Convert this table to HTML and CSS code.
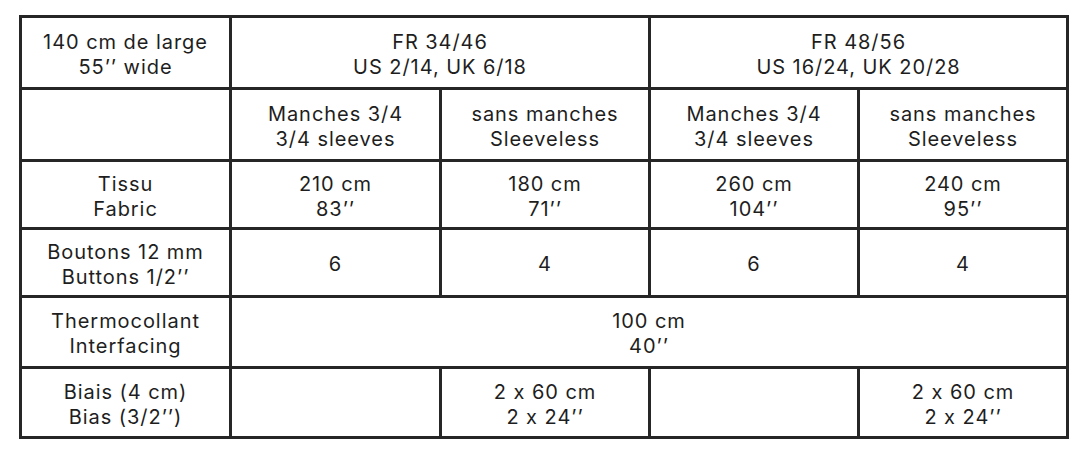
FILE: index.html
```html
<!DOCTYPE html>
<html lang="fr">
<head>
<meta charset="utf-8">
<title>Métrage</title>
<link rel="stylesheet" href="styles.css">
</head>
<body>
<div class="page">
<table class="chart">
  <colgroup>
    <col class="c1"><col class="c1"><col class="c2"><col class="c2"><col class="c2">
  </colgroup>
  <tr class="r1">
    <td>140 cm de large<br>55’’ wide</td>
    <td colspan="2">FR 34/46<br>US 2/14, UK 6/18</td>
    <td colspan="2">FR 48/56<br>US 16/24, UK 20/28</td>
  </tr>
  <tr class="r2">
    <td></td>
    <td>Manches 3/4<br>3/4 sleeves</td>
    <td>sans manches<br>Sleeveless</td>
    <td>Manches 3/4<br>3/4 sleeves</td>
    <td>sans manches<br>Sleeveless</td>
  </tr>
  <tr class="r3">
    <td>Tissu<br>Fabric</td>
    <td>210 cm<br>83’’</td>
    <td>180 cm<br>71’’</td>
    <td>260 cm<br>104’’</td>
    <td>240 cm<br>95’’</td>
  </tr>
  <tr class="r4">
    <td>Boutons 12 mm<br>Buttons 1/2’’</td>
    <td>6</td>
    <td>4</td>
    <td>6</td>
    <td>4</td>
  </tr>
  <tr class="r5">
    <td>Thermocollant<br>Interfacing</td>
    <td colspan="4">100 cm<br>40’’</td>
  </tr>
  <tr class="r6">
    <td>Biais (4 cm)<br>Bias (3/2’’)</td>
    <td></td>
    <td>2 x 60 cm<br>2 x 24’’</td>
    <td></td>
    <td>2 x 60 cm<br>2 x 24’’</td>
  </tr>
</table>
</div>
</body>
</html>
```
FILE: styles.css
```css
html, body {
  margin: 0;
  padding: 0;
  background: #fff;
}
.page {
  padding: 15px 0 0 19px;
}
.chart {
  border-collapse: collapse;
  table-layout: fixed;
  width: 1047px;
  border: 3px solid #262626;
  font-family: Inter, "Liberation Sans", sans-serif;
  font-size: 20px;
  letter-spacing: 0.95px;
  font-feature-settings: "calt" 0;
  line-height: 25px;
  color: #1e1e1e;
}
.chart .c1 {
  width: 210px;
}
.chart .c2 {
  width: 209px;
}
.chart td {
  border: 3px solid #262626;
  text-align: center;
  vertical-align: middle;
  padding: 4px 0 0 0;
}
.r1 { height: 72px; }
.r2 { height: 72px; }
.r3 { height: 68px; }
.r4 { height: 68px; }
.r5 { height: 71px; }
.r6 { height: 70px; }
```
